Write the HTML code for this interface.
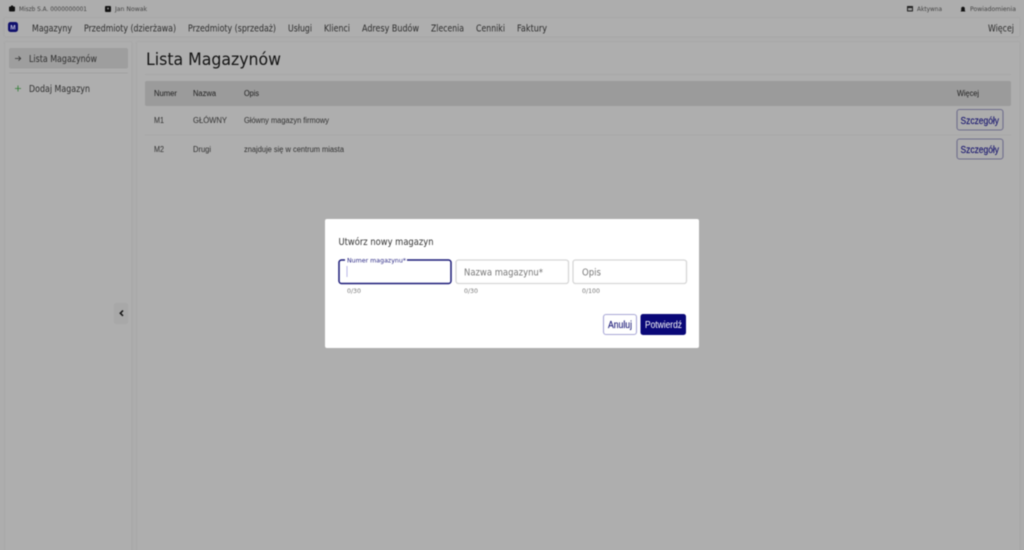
<!DOCTYPE html>
<html lang="pl"><head><meta charset="utf-8"><title>Lista Magazynów</title>
<style>
html,body{margin:0;padding:0;width:1024px;height:550px;overflow:hidden;background:#adadad}
svg{display:block}
text{font-family:"Liberation Sans",sans-serif}
.o text,text.o{font-family:"DejaVu Sans",sans-serif}
.blur{filter:blur(.45px)}
</style></head><body>
<svg width="1024" height="550" viewBox="0 0 1024 550" xmlns="http://www.w3.org/2000/svg">
<rect width="1024" height="550" fill="#adadad"/>
<g class="blur">
<!-- panels -->
<rect x="4" y="17.500" width="1016" height="19.500" rx="2" fill="#aeaeae" stroke="#a7a7a7"/>
<rect x="4.500" y="41.500" width="127.500" height="520" rx="2" fill="#aeaeae" stroke="#a7a7a7"/>
<rect x="136.500" y="41.500" width="883.500" height="520" rx="2" fill="#aeaeae" stroke="#a7a7a7"/>
<!-- top bar -->
<rect x="9" y="6.500" width="6" height="5" rx="1" fill="#111"/>
<rect x="11" y="5.500" width="2" height="2" fill="#111"/>
<g class="o" font-size="6" fill="#444">
<text x="19" y="11" textLength="68" lengthAdjust="spacingAndGlyphs">Miszb S.A. 0000000001</text>
<text x="115" y="11" textLength="32" lengthAdjust="spacingAndGlyphs">Jan Nowak</text>
<text x="917" y="11" textLength="25" lengthAdjust="spacingAndGlyphs">Aktywna</text>
<text x="970" y="11" textLength="46" lengthAdjust="spacingAndGlyphs">Powiadomienia</text>
</g>
<rect x="105" y="6" width="6" height="6" rx="1" fill="#111"/>
<circle cx="108" cy="8.500" r="1" fill="#888"/>
<rect x="907" y="6" width="6" height="5.500" rx=".5" fill="#222"/>
<rect x="908" y="8" width="4" height="2.500" fill="#9a9a9a"/>
<path d="M960.500 11.500h5l-.7-1v-2a1.800 1.800 0 0 0-3.600 0v2z" fill="#111"/>
<!-- nav -->
<rect x="8" y="22" width="10" height="10" rx="2.500" fill="#10106c"/>
<text x="13" y="29.500" font-size="6.500" font-weight="700" fill="#b9b9d8" text-anchor="middle">M</text>
<g class="o" font-size="9.500" fill="#2c2c2c">
<text x="32" y="31.500" textLength="40" lengthAdjust="spacingAndGlyphs">Magazyny</text>
<text x="84" y="31.500" textLength="92" lengthAdjust="spacingAndGlyphs">Przedmioty (dzierżawa)</text>
<text x="188" y="31.500" textLength="88" lengthAdjust="spacingAndGlyphs">Przedmioty (sprzedaż)</text>
<text x="288" y="31.500" textLength="24" lengthAdjust="spacingAndGlyphs">Usługi</text>
<text x="324" y="31.500" textLength="26" lengthAdjust="spacingAndGlyphs">Klienci</text>
<text x="362" y="31.500" textLength="57" lengthAdjust="spacingAndGlyphs">Adresy Budów</text>
<text x="431" y="31.500" textLength="33" lengthAdjust="spacingAndGlyphs">Zlecenia</text>
<text x="476" y="31.500" textLength="29" lengthAdjust="spacingAndGlyphs">Cenniki</text>
<text x="517" y="31.500" textLength="30" lengthAdjust="spacingAndGlyphs">Faktury</text>
<text x="988" y="31.500" textLength="26" lengthAdjust="spacingAndGlyphs">Więcej</text>
</g>
<!-- sidebar -->
<rect x="9" y="48" width="119" height="20.500" rx="2" fill="#9e9e9e"/>
<path d="M15 58.500h5.500M18.500 56.300l2.200 2.200-2.200 2.200" fill="none" stroke="#333" stroke-width=".8"/>
<text class="o" x="29" y="62" font-size="9.500" fill="#2e2e2e" textLength="68" lengthAdjust="spacingAndGlyphs">Lista Magazynów</text>
<rect x="9" y="72.500" width="119" height="1" fill="#a2a2a2"/>
<path d="M15 88.500h6M18 85.500v6" fill="none" stroke="#2f7d33" stroke-width=".8"/>
<text class="o" x="29" y="92" font-size="9.500" fill="#2e2e2e" textLength="61" lengthAdjust="spacingAndGlyphs">Dodaj Magazyn</text>
<rect x="114" y="303" width="14" height="21" rx="2" fill="#a8a8a8"/>
<path d="M123 310.500l-2.700 2.700 2.700 2.700" fill="none" stroke="#111" stroke-width="1.500"/>
<!-- main -->
<text class="o" x="146" y="65" font-size="17" fill="#141414" textLength="135" lengthAdjust="spacingAndGlyphs">Lista Magazynów</text>
<rect x="145" y="74" width="866" height="1" fill="#a7a7a7"/>
<rect x="145" y="81" width="866" height="25" rx="2" fill="#9b9b9b"/>
<g font-size="8" fill="#1c1c1c">
<text x="154" y="96" textLength="23" lengthAdjust="spacingAndGlyphs">Numer</text>
<text x="193" y="96" textLength="23" lengthAdjust="spacingAndGlyphs">Nazwa</text>
<text x="244" y="96" textLength="15" lengthAdjust="spacingAndGlyphs">Opis</text>
<text x="957" y="96" textLength="22" lengthAdjust="spacingAndGlyphs">Więcej</text>
</g>
<g font-size="8" fill="#303030">
<text x="154" y="123" textLength="10" lengthAdjust="spacingAndGlyphs">M1</text>
<text x="193" y="123" textLength="34" lengthAdjust="spacingAndGlyphs">GŁÓWNY</text>
<text x="244" y="123" textLength="85" lengthAdjust="spacingAndGlyphs">Główny magazyn firmowy</text>
<text x="154" y="152" textLength="10" lengthAdjust="spacingAndGlyphs">M2</text>
<text x="193" y="152" textLength="18" lengthAdjust="spacingAndGlyphs">Drugi</text>
<text x="244" y="152" textLength="100" lengthAdjust="spacingAndGlyphs">znajduje się w centrum miasta</text>
</g>
<rect x="145" y="134.500" width="866" height="1" fill="#a7a7a7"/>
<rect x="957" y="109.500" width="46" height="20.500" rx="2.500" fill="#adadad" stroke="#6f6e8c" stroke-width="1.100"/>
<rect x="957" y="139" width="46" height="20" rx="2.500" fill="#adadad" stroke="#6f6e8c" stroke-width="1.100"/>
<g font-size="10" fill="#1a1870" stroke="#1a1870" stroke-width=".15">
<text x="960.500" y="124" textLength="38.500" lengthAdjust="spacingAndGlyphs">Szczegóły</text>
<text x="960.500" y="153" textLength="38.500" lengthAdjust="spacingAndGlyphs">Szczegóły</text>
</g>
<!-- dialog -->
<rect x="325" y="219" width="374" height="129" rx="2" fill="#fff"/>
<text class="o" x="338.500" y="245" font-size="9.500" fill="#333" textLength="95" lengthAdjust="spacingAndGlyphs">Utwórz nowy magazyn</text>
<rect x="339" y="260" width="112" height="23.500" rx="2.500" fill="#fff" stroke="#1b1a78" stroke-width="1.500"/>
<rect x="345" y="256" width="62" height="6" fill="#fff"/>
<text class="o" x="347" y="262.500" font-size="6.500" fill="#2c2a86" textLength="59" lengthAdjust="spacingAndGlyphs">Numer magazynu*</text>
<rect x="346.500" y="266" width="1" height="11" fill="#b9b8e6"/>
<rect x="456" y="260" width="112.500" height="23.500" rx="2.500" fill="#fff" stroke="#d6d6d6" stroke-width="1.300"/>
<text class="o" x="464" y="275.500" font-size="9.500" fill="#777" textLength="79" lengthAdjust="spacingAndGlyphs">Nazwa magazynu*</text>
<rect x="573" y="260" width="113.500" height="23.500" rx="2.500" fill="#fff" stroke="#d6d6d6" stroke-width="1.300"/>
<text class="o" x="582" y="275.500" font-size="9.500" fill="#777" textLength="19" lengthAdjust="spacingAndGlyphs">Opis</text>
<g class="o" font-size="6.500" fill="#777">
<text x="347" y="293" textLength="14" lengthAdjust="spacingAndGlyphs">0/30</text>
<text x="464" y="293" textLength="14" lengthAdjust="spacingAndGlyphs">0/30</text>
<text x="582" y="293" textLength="18" lengthAdjust="spacingAndGlyphs">0/100</text>
</g>
<rect x="603.500" y="314.500" width="33" height="20" rx="2.500" fill="#fff" stroke="#a9a8d6" stroke-width="1.100"/>
<text x="608" y="328" font-size="10" fill="#1b1a78" stroke="#1b1a78" stroke-width=".15" textLength="24" lengthAdjust="spacingAndGlyphs">Anuluj</text>
<rect x="640.500" y="314" width="45.500" height="21" rx="2.500" fill="#0a0878"/>
<text x="645" y="328" font-size="10" fill="#fff" textLength="37" lengthAdjust="spacingAndGlyphs">Potwierdź</text>
</g>
</svg>
</body></html>
